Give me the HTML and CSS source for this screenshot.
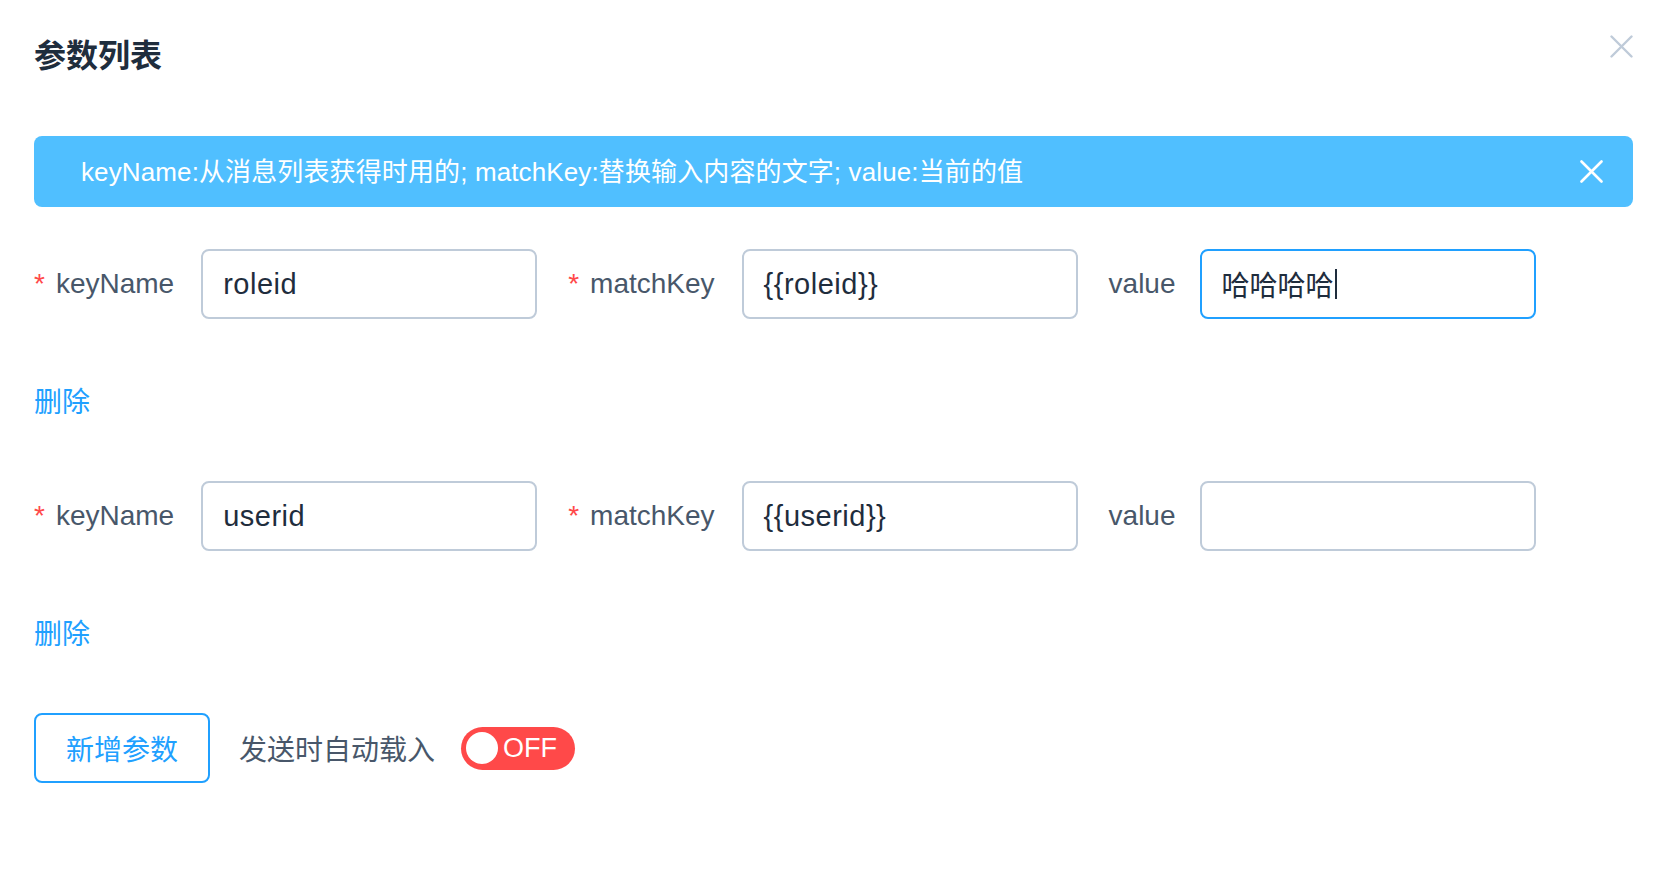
FILE: index.html
```html
<!DOCTYPE html>
<html lang="zh-CN">
<head>
<meta charset="utf-8">
<title>参数列表</title>
<link rel="stylesheet" href="styles.css">
</head>
<body>
<div class="dialog">
  <div class="dialog-header">
    <h2 class="dialog-title">参数列表</h2>
    <span class="dialog-close">
      <svg width="23" height="23" viewBox="0 0 23 23"><path d="M1.5 1.5 L21.5 21.5 M21.5 1.5 L1.5 21.5" fill="none" stroke="currentColor" stroke-width="2.4" stroke-linecap="round"/></svg>
    </span>
  </div>

  <div class="alert">
    <span class="alert-text">keyName:从消息列表获得时用的; matchKey:替换输入内容的文字; value:当前的值</span>
    <span class="alert-close">
      <svg width="23" height="23" viewBox="0 0 23 23"><path d="M1.5 1.5 L21.5 21.5 M21.5 1.5 L1.5 21.5" fill="none" stroke="currentColor" stroke-width="2.6" stroke-linecap="round"/></svg>
    </span>
  </div>

  <div class="param">
    <div class="form-row">
      <div class="form-item">
        <span class="form-label required">keyName</span>
        <div class="input">roleid</div>
      </div>
      <div class="form-item">
        <span class="form-label required">matchKey</span>
        <div class="input">{{roleid}}</div>
      </div>
      <div class="form-item">
        <span class="form-label form-label-plain">value</span>
        <div class="input input-focus">哈哈哈哈<span class="caret"></span></div>
      </div>
    </div>
    <a class="link-delete">删除</a>
  </div>

  <div class="param">
    <div class="form-row">
      <div class="form-item">
        <span class="form-label required">keyName</span>
        <div class="input">userid</div>
      </div>
      <div class="form-item">
        <span class="form-label required">matchKey</span>
        <div class="input">{{userid}}</div>
      </div>
      <div class="form-item">
        <span class="form-label form-label-plain">value</span>
        <div class="input"></div>
      </div>
    </div>
    <a class="link-delete">删除</a>
  </div>

  <div class="footer-row">
    <button class="btn">新增参数</button>
    <span class="footer-label">发送时自动载入</span>
    <span class="switch"><span class="switch-knob"></span><span class="switch-text">OFF</span></span>
  </div>
</div>
</body>
</html>
```

FILE: styles.css
```css
* {
  box-sizing: border-box;
}

html, body {
  margin: 0;
  padding: 0;
  background: #ffffff;
}

body {
  font-family: "Liberation Sans", "Noto Sans CJK SC", sans-serif;
  color: #1f2d3d;
}

.dialog {
  width: 1660px;
  padding: 35px 27px 0 34px;
}

.dialog-header {
  display: flex;
  justify-content: space-between;
  align-items: flex-start;
}

.dialog-title {
  margin: 0 0 4px 0;
  font-family: "Noto Sans CJK SC", sans-serif;
  font-size: 32px;
  font-weight: 700;
  line-height: 36px;
  color: #1f2d3d;
}

.dialog-close {
  display: block;
  width: 23px;
  height: 23px;
  color: #bfcbd9;
}

.dialog-close svg,
.alert-close svg {
  display: block;
}

.alert {
  margin-top: 61px;
  height: 71px;
  display: flex;
  align-items: center;
  justify-content: space-between;
  padding: 0 30px 0 47px;
  background: #50bfff;
  border-radius: 8px;
  color: #ffffff;
}

.alert-text {
  font-size: 26px;
  line-height: 30px;
  letter-spacing: 0.12px;
}

.alert-close {
  display: block;
  width: 23px;
  height: 23px;
  color: #ffffff;
}

.alert + .param {
  margin-top: 42px;
}

.form-row {
  display: flex;
  align-items: center;
  height: 70px;
}

.form-item {
  display: flex;
  align-items: center;
  margin-right: 31px;
}

.form-label {
  font-size: 28px;
  line-height: 40px;
  color: #48576a;
  margin-right: 27px;
}

.form-label-plain {
  margin-right: 24px;
}

.form-label.required::before {
  content: "*";
  color: #ff4949;
  margin-right: 11px;
}

.input {
  width: 336px;
  height: 70px;
  border: 2px solid #bfcbd9;
  border-radius: 8px;
  padding: 0 20px;
  display: flex;
  align-items: center;
  font-size: 29px;
  letter-spacing: 0.5px;
  color: #1f2d3d;
  background: #ffffff;
}

.input-focus {
  border-color: #20a0ff;
  font-size: 28px;
  letter-spacing: 0;
}

.caret {
  display: inline-block;
  width: 2px;
  height: 30px;
  background: #1f2d3d;
  margin-left: 1px;
}

.link-delete {
  display: block;
  margin: 61px 0;
  font-family: "Noto Sans CJK SC", sans-serif;
  font-size: 28px;
  line-height: 40px;
  color: #20a0ff;
  cursor: pointer;
}

.footer-row {
  display: flex;
  align-items: center;
}

.btn {
  height: 70px;
  padding: 0 30px;
  border: 2px solid #20a0ff;
  border-radius: 8px;
  background: #ffffff;
  color: #20a0ff;
  font-family: "Noto Sans CJK SC", sans-serif;
  font-size: 28px;
  margin: 0 29px 0 0;
}

.footer-label {
  font-family: "Noto Sans CJK SC", sans-serif;
  font-size: 28px;
  line-height: 40px;
  color: #48576a;
  margin-right: 26px;
}

.switch {
  width: 114px;
  height: 43px;
  border-radius: 22px;
  background: #ff4949;
  display: flex;
  align-items: center;
  padding: 0 18px 0 5px;
  justify-content: space-between;
}

.switch-knob {
  width: 32px;
  height: 32px;
  border-radius: 50%;
  background: #ffffff;
}

.switch-text {
  font-size: 27px;
  line-height: 30px;
  color: #ffffff;
}
```
